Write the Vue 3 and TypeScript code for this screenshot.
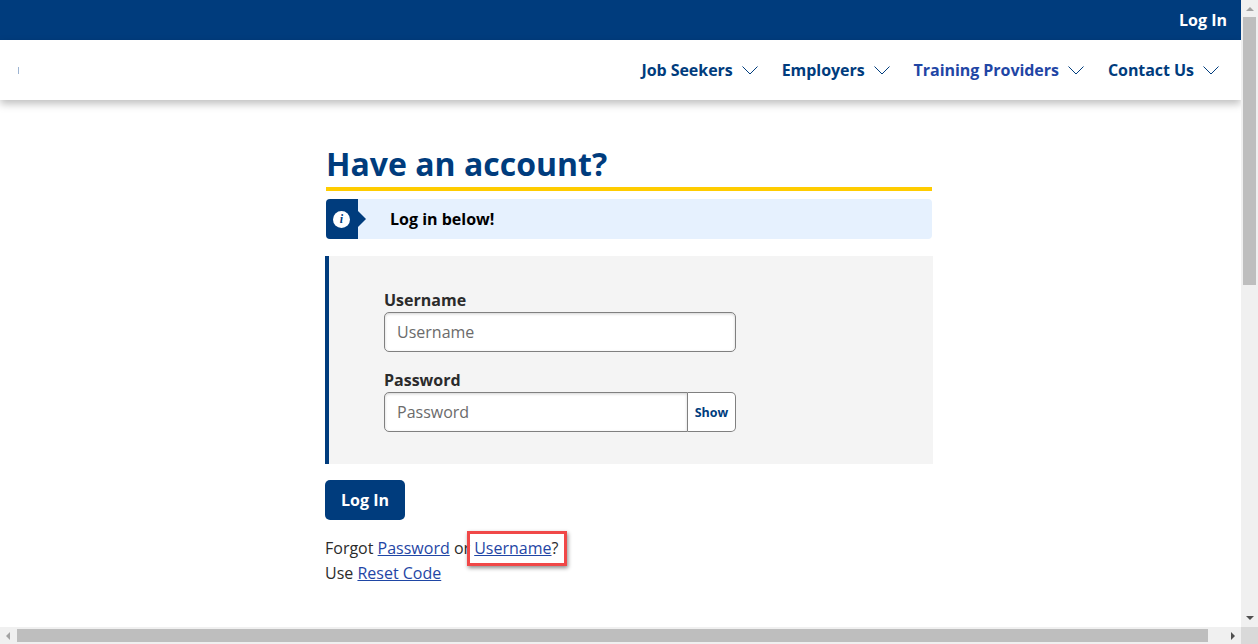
<script setup lang="ts">
type NavItem = {
  label: string
  hovered?: boolean
}

const navItems: NavItem[] = [
  { label: 'Job Seekers' },
  { label: 'Employers' },
  { label: 'Training Providers', hovered: true },
  { label: 'Contact Us' }
]
</script>

<template>
  <div class="window">
    <div class="page">
      <div class="top-bar">
        <a class="top-link">Log In</a>
      </div>
      <header class="nav-bar">
        <span class="logo-sliver"></span>
        <nav class="nav">
          <a v-for="item in navItems" :key="item.label" class="nav-item" :class="{ hovered: item.hovered }">
            {{ item.label }}
            <svg class="chevron" width="16" height="9" viewBox="0 0 16 9" fill="none">
              <path d="M0.5 0.5 L8 8 L15.5 0.5" stroke="#003c7d" stroke-width="1" />
            </svg>
          </a>
        </nav>
      </header>

      <main class="content">
        <h1 class="title">Have an account?</h1>

        <div class="notice">
          <div class="notice-icon">
            <span class="info-dot">i</span>
          </div>
          <span class="notice-text">Log in below!</span>
        </div>

        <form class="panel" @submit.prevent>
          <label class="field">
            <span class="label">Username</span>
            <input class="input" type="text" placeholder="Username" />
          </label>
          <label class="field">
            <span class="label">Password</span>
            <span class="password-row">
              <input class="input joined" type="password" placeholder="Password" />
              <button class="show-btn" type="button">Show</button>
            </span>
          </label>
        </form>

        <button class="login-btn" type="button">Log In</button>

        <p class="help">
          Forgot <a class="link">Password</a> or
          <span class="highlight-wrap"><a class="link">Username</a><span class="highlight"></span></span>?
          <br />
          Use <a class="link">Reset Code</a>
        </p>
      </main>
    </div>

    <div class="scroll-v">
      <span class="arrow up"></span>
      <span class="thumb-v"></span>
      <span class="arrow down"></span>
    </div>
    <div class="scroll-h">
      <span class="arrow left"></span>
      <span class="thumb-h"></span>
      <span class="arrow right"></span>
    </div>
    <div class="corner"></div>
  </div>
</template>

<style>
html,
body {
  margin: 0;
  overflow: hidden;
}
</style>

<style scoped>
.window {
  display: grid;
  grid-template-columns: 1241px 17px;
  grid-template-rows: 627px 17px;
  width: 1258px;
  height: 644px;
  overflow: hidden;
  font-family: 'Open Sans', 'Liberation Sans', sans-serif;
  background: #fff;
}

.page {
  overflow: hidden;
  color: #2b2b2b;
}

.top-bar {
  display: flex;
  justify-content: flex-end;
  align-items: center;
  height: 40px;
  padding-right: 14px;
  background: #003c7d;
}

.top-link {
  color: #fff;
  font-size: 16px;
  font-weight: 700;
}

.nav-bar {
  position: relative;
  display: flex;
  justify-content: space-between;
  align-items: center;
  height: 60px;
  padding: 0 22px 0 18px;
  background: #fff;
  box-shadow: 0 4px 8px rgba(0, 0, 0, 0.25);
}

.logo-sliver {
  width: 1px;
  height: 7px;
  background: #9db4d2;
}

.nav {
  display: flex;
  gap: 24px;
}

.nav-item {
  display: flex;
  align-items: center;
  gap: 9px;
  color: #003c7d;
  font-size: 16px;
  font-weight: 700;
  letter-spacing: -0.05px;
}

.nav-item.hovered {
  color: #1f46a5;
}

.content {
  display: flex;
  flex-direction: column;
  width: 608px;
  margin-left: 325px;
  padding-top: 44px;
}

.title {
  margin: 0 1px;
  padding-bottom: 3px;
  border-bottom: 4px solid #ffcc00;
  color: #003c7d;
  font-size: 32px;
  line-height: 40px;
  font-weight: 700;
}

.notice {
  display: flex;
  align-items: center;
  height: 40px;
  margin: 8px 1px 17px;
  border-radius: 4px;
  background: #e6f1fe;
}

.notice-icon {
  position: relative;
  display: flex;
  align-items: center;
  justify-content: center;
  box-sizing: border-box;
  width: 32px;
  height: 40px;
  padding-right: 1px;
  border-radius: 4px 0 0 4px;
  background: #003c7d;
}

.notice-icon::after {
  content: '';
  position: absolute;
  left: 32px;
  top: 12px;
  border-top: 8px solid transparent;
  border-bottom: 8px solid transparent;
  border-left: 8px solid #003c7d;
}

.info-dot {
  width: 17px;
  height: 17px;
  border-radius: 50%;
  background: #fff;
  color: #003c7d;
  font-family: 'Liberation Serif', serif;
  font-size: 12px;
  font-style: italic;
  font-weight: 700;
  line-height: 17px;
  text-align: center;
}

.notice-text {
  margin-left: 32px;
  color: #000;
  font-size: 16px;
  font-weight: 700;
}

.panel {
  display: flex;
  flex-direction: column;
  gap: 17px;
  box-sizing: border-box;
  height: 208px;
  padding: 33px 0 0 55px;
  border-left: 4px solid #003c7d;
  background: #f4f4f4;
}

.field {
  display: flex;
  flex-direction: column;
  width: 352px;
}

.label {
  font-size: 16px;
  line-height: 23px;
  font-weight: 700;
}

.input {
  box-sizing: border-box;
  width: 100%;
  height: 40px;
  padding: 0 12px;
  border: 1px solid #808080;
  border-radius: 5px;
  background: #fff;
  box-shadow: inset 0 1px 3px rgba(0, 0, 0, 0.18);
  font-family: inherit;
  font-size: 16px;
  outline: none;
}

.input::placeholder {
  color: #6b6b6b;
  opacity: 1;
}

.password-row {
  display: flex;
}

.input.joined {
  flex: 1;
  min-width: 0;
  border-radius: 5px 0 0 5px;
}

.show-btn {
  width: 48px;
  height: 40px;
  padding: 0;
  border: 1px solid #808080;
  border-left: 0;
  border-radius: 0 5px 5px 0;
  background: #fff;
  color: #003c7d;
  font-family: inherit;
  font-size: 12.5px;
  font-weight: 700;
}

.login-btn {
  width: 80px;
  height: 40px;
  margin-top: 16px;
  padding: 0;
  border: 0;
  border-radius: 5px;
  background: #003c7d;
  color: #fff;
  font-family: inherit;
  font-size: 16px;
  font-weight: 700;
}

.help {
  margin: 16px 0 0;
  font-size: 16px;
  line-height: 25px;
}

.link {
  color: #1f46a5;
  text-decoration: underline;
}

.highlight-wrap {
  position: relative;
}

.highlight {
  position: absolute;
  left: -7px;
  right: -15px;
  top: -6px;
  bottom: -7px;
  border: 3px solid #f04848;
  box-shadow: 1px 2px 4px rgba(0, 0, 0, 0.45);
}

.scroll-v {
  display: flex;
  flex-direction: column;
  align-items: center;
  background: #f0f0f0;
}

.thumb-v {
  width: 13px;
  height: 268px;
  background: #bebebe;
}

.scroll-h {
  display: flex;
  align-items: center;
  background: #f0f0f0;
}

.thumb-h {
  width: 1191px;
  height: 13px;
  background: #bebebe;
}

.corner {
  background: #d9d9d9;
}

.arrow {
  flex: none;
  width: 0;
  height: 0;
}

.arrow.up {
  margin: 7px 0 6px;
  border-left: 4px solid transparent;
  border-right: 4px solid transparent;
  border-bottom: 4px solid #a3a3a3;
}

.arrow.down {
  margin: auto 0 7px;
  border-left: 4px solid transparent;
  border-right: 4px solid transparent;
  border-top: 4px solid #505050;
}

.arrow.left {
  margin: 0 7px 0 6px;
  border-top: 4px solid transparent;
  border-bottom: 4px solid transparent;
  border-right: 4px solid #a3a3a3;
}

.arrow.right {
  margin: 0 6px 0 auto;
  border-top: 4px solid transparent;
  border-bottom: 4px solid transparent;
  border-left: 4px solid #505050;
}
</style>
